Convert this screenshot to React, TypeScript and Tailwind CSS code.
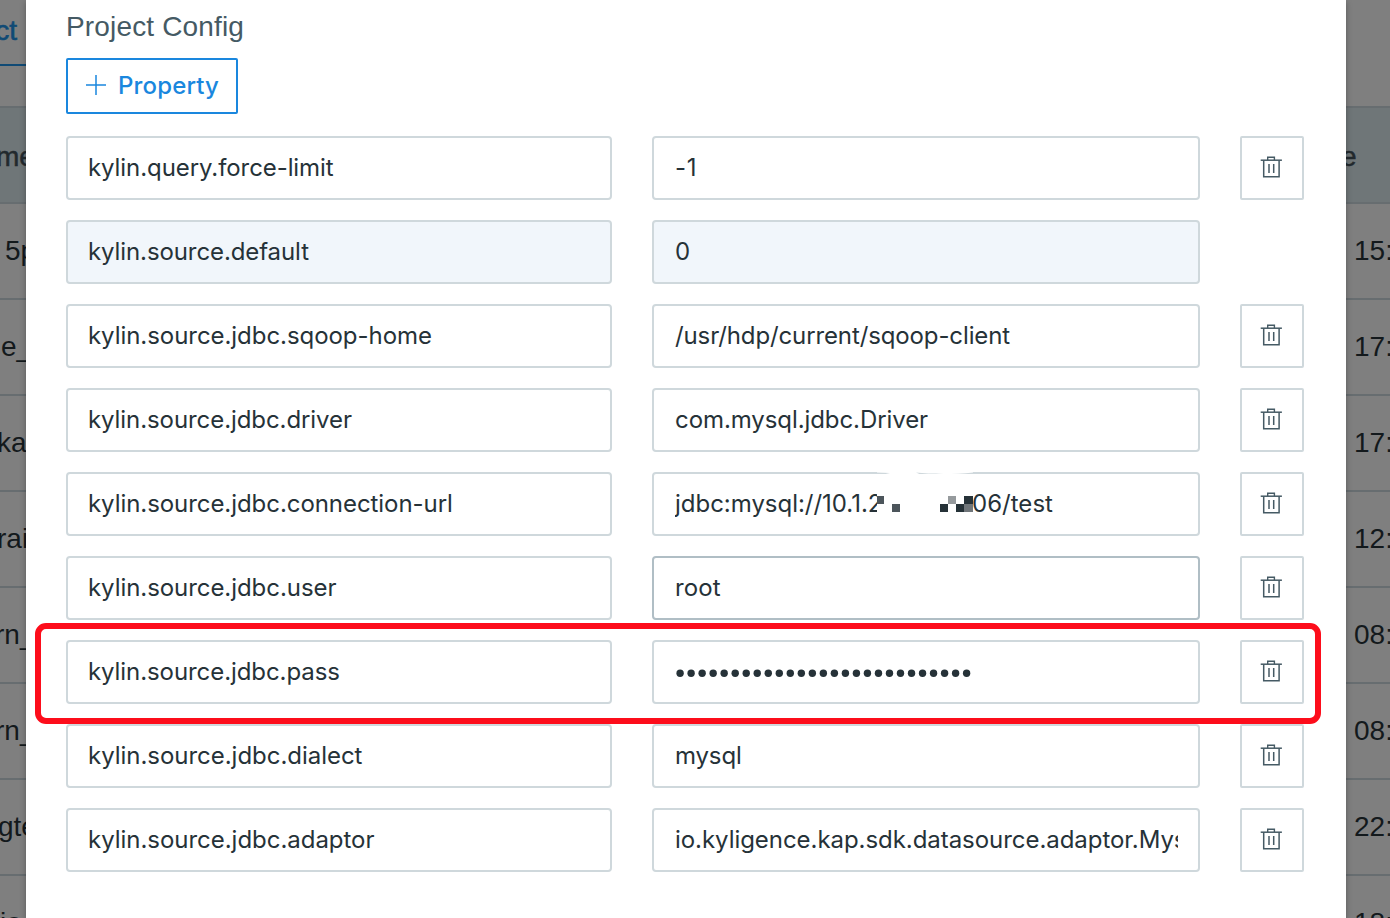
import React from "react";

const field =
  "flex h-16 items-center overflow-hidden whitespace-nowrap rounded border-2 pr-5 pb-px text-2xl text-[#263238]";

type Row = {
  name: string;
  nameTracking: string;
  value: React.ReactNode;
  locked?: boolean;
  hover?: boolean;
};

function TrashIcon() {
  return (
    <svg width="22" height="22" viewBox="0 0 22 22" fill="none" stroke="#455a64" className="shrink-0">
      <path d="M.7 4.2h21.2" strokeWidth="1.5" />
      <path d="M7.7 4V1.2h6.7V4" strokeWidth="1.4" />
      <path d="M3.7 4.2v16.6h15.4V4.2" strokeWidth="1.5" />
      <path d="M9 8v9M13.7 8v9" strokeWidth="1.5" />
    </svg>
  );
}

function Mosaic() {
  return (
    <svg width="96" height="60" viewBox="0 0 96 60" className="shrink-0">
      <path d="M0 22h7v8H0z" fill="#4c555b" />
      <path d="M15 30h8v8h-8z" fill="#4c555b" />
      <path d="M63 30h8v8h-8zM79 30h8v8h-8zM87 22h9v8h-9z" fill="#263238" />
      <path d="M71 22h8v8h-8z" fill="#969a9d" />
      <path d="M87 30h9v8h-9z" fill="#70767a" />
    </svg>
  );
}

function ConnectionUrl() {
  return (
    <>
      <span className="w-[202px] shrink-0 overflow-hidden tracking-[-0.02px]">jdbc:mysql://10.1.2</span>
      <Mosaic />
      <span className="-ml-px tracking-[0.02px]">06/test</span>
    </>
  );
}

function Password() {
  return (
    <svg width="300" height="12" viewBox="0 0 300 12" fill="#263238" className="mt-[3px] shrink-0">
      {Array.from({ length: 27 }, (_, i) => (
        <circle key={i} cx={5.1 + i * 11.02} cy="6.2" r="3.7" />
      ))}
    </svg>
  );
}

const rows: Row[] = [
  { name: "kylin.query.force-limit", nameTracking: "tracking-[-0.08px]", value: <span className="tracking-[0.6px]">-1</span> },
  { name: "kylin.source.default", nameTracking: "tracking-[-0.1px]", value: <span>0</span>, locked: true },
  { name: "kylin.source.jdbc.sqoop-home", nameTracking: "tracking-[-0.05px]", value: <span className="tracking-[-0.12px]">/usr/hdp/current/sqoop-client</span> },
  { name: "kylin.source.jdbc.driver", nameTracking: "tracking-[-0.08px]", value: <span className="tracking-[-0.08px]">com.mysql.jdbc.Driver</span> },
  { name: "kylin.source.jdbc.connection-url", nameTracking: "tracking-[-0.06px]", value: <ConnectionUrl /> },
  { name: "kylin.source.jdbc.user", nameTracking: "tracking-[-0.06px]", value: <span className="tracking-[0.15px]">root</span>, hover: true },
  { name: "kylin.source.jdbc.pass", nameTracking: "tracking-[-0.08px]", value: <Password /> },
  { name: "kylin.source.jdbc.dialect", nameTracking: "tracking-[-0.03px]", value: <span className="tracking-[-0.15px]">mysql</span> },
  {
    name: "kylin.source.jdbc.adaptor",
    nameTracking: "tracking-[-0.03px]",
    value: <span className="w-full overflow-hidden tracking-[-0.05px]">io.kyligence.kap.sdk.datasource.adaptor.Mysql</span>,
  },
];

const leftCells = [
  { text: "5p", shift: "ml-[5px]" },
  { text: "e_", shift: "ml-px" },
  { text: "kap", shift: "-ml-[3px]" },
  { text: "rain", shift: "-ml-[3px]" },
  { text: "rn_", shift: "-ml-[5px]" },
  { text: "rn_", shift: "-ml-[5px]" },
  { text: "gte", shift: "-ml-[2px]" },
  { text: "io", shift: "ml-0" },
];

const rightCells = ["15:", "17:", "17:", "12:", "08:", "08:", "22:", "18:"];

const cell =
  "flex h-24 shrink-0 items-center whitespace-nowrap border-b-2 border-[#676d70] text-[28px] text-[#13191c]";

function PageLeft() {
  return (
    <div className="flex h-full w-[26px] shrink-0 flex-col overflow-hidden bg-[#7f7f7f]">
      <div className="flex h-[66px] shrink-0 items-center justify-end border-b-2 border-[#104a75] pr-[9px] pb-[3px] text-[28px] text-[#104a75] [-webkit-text-stroke:0.6px_#104a75]">
        ct
      </div>
      <div className="h-10 shrink-0" />
      <div className="flex h-[98px] shrink-0 items-center border-y-2 border-[#676d70] bg-[#6f7678] pt-1 text-[28px] text-[#22292d]">
        <span className="-ml-1 [-webkit-text-stroke:0.5px_#22292d]">me</span>
      </div>
      {leftCells.map((c, i) => (
        <div key={i} className={cell}>
          <span className={c.shift}>{c.text}</span>
        </div>
      ))}
    </div>
  );
}

function PageRight() {
  return (
    <div className="flex h-full w-11 shrink-0 flex-col overflow-hidden bg-[#7f7f7f]">
      <div className="h-[106px] shrink-0" />
      <div className="flex h-[98px] shrink-0 items-center border-y-2 border-[#676d70] bg-[#6f7678] pt-1 text-[28px] text-[#22292d]">
        <span className="-ml-[5px] [-webkit-text-stroke:0.5px_#22292d]">e</span>
      </div>
      {rightCells.map((t, i) => (
        <div key={i} className={cell}>
          <span className="ml-2">{t}</span>
        </div>
      ))}
    </div>
  );
}

function PropertyRow({ row }: { row: Row }) {
  const tone = row.locked ? "bg-[#f1f6fb] border-[#cfd8dc]" : "bg-white border-[#cfd8dc]";
  const valueTone = row.hover ? "bg-white border-[#b0bec5]" : tone;
  return (
    <div className="flex h-16 shrink-0">
      <div className={`${field} ${tone} w-[546px] shrink-0 pl-5`}>
        <span className={row.nameTracking}>{row.name}</span>
      </div>
      <div className={`${field} ${valueTone} ml-10 w-[548px] shrink-0 pl-[21px]`}>{row.value}</div>
      {!row.locked && (
        <button className="ml-10 flex size-16 shrink-0 items-center justify-center rounded-xs border-2 border-[#cfd8dc] pb-0.5 pr-0.5">
          <TrashIcon />
        </button>
      )}
    </div>
  );
}

export default function App() {
  return (
    <div className="relative flex h-[918px] w-[1390px] overflow-hidden bg-[#7f7f7f] font-['Liberation_Sans',Arial,sans-serif]">
      <PageLeft />
      <main className="relative z-10 flex h-full w-[1320px] shrink-0 flex-col bg-white px-10 font-[Inter,sans-serif] shadow-[0_2px_6px_rgba(0,0,0,0.3)]">
        <h2 className="mt-2 flex h-[38px] shrink-0 items-center font-['Liberation_Sans',Arial,sans-serif] text-[28px] tracking-[0.16px] text-[#455a64]">
          Project Config
        </h2>
        <button className="mt-3 flex h-14 w-[172px] shrink-0 items-center rounded-xs border-2 border-[#1a87de] pl-[18px] text-2xl font-medium text-[#1a87de]">
          <svg width="20" height="20" viewBox="0 0 20 20" fill="none" stroke="#1a87de" strokeWidth="1.5" className="mb-0.5 mr-3 shrink-0">
            <path d="M10 0v20M0 10h20" />
          </svg>
          <span className="tracking-[0.15px]">Property</span>
        </button>
        <section className="mt-[22px] flex flex-col gap-5">
          {rows.map((row) => (
            <PropertyRow key={row.name} row={row} />
          ))}
        </section>
      </main>
      <PageRight />
      <div className="absolute left-[34.5px] top-[623px] z-20 h-[100.5px] w-[1286px] rounded-[11px] border-[6px] border-[#fd0d1b]" />
      <svg className="absolute left-[876px] top-[471px] z-20" width="98" height="4" viewBox="0 0 98 4" fill="#fff">
        <path d="M1 0H97V1.5C80 3.5 60 3 52 2.6L40 1.5Q44 4 50 4H0Q8 4 14 2L1 1.5z" />
      </svg>
    </div>
  );
}
